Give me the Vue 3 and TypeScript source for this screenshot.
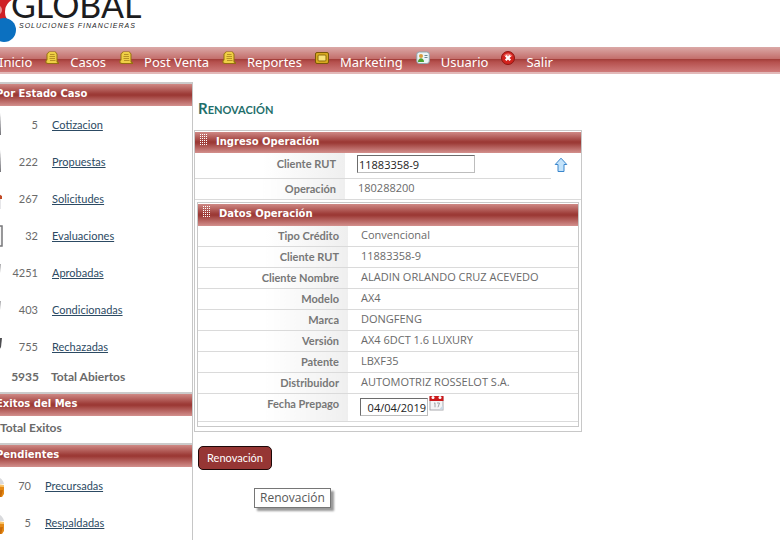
<script setup lang="ts">
import { ref } from 'vue'

interface MenuItem {
  label: string
  icon: 'none' | 'note' | 'board' | 'user' | 'exit'
}
interface StatusRow {
  count: number
  label: string
  icon: 'page' | 'house' | 'sheet' | 'check' | 'dark' | 'box'
}
interface Detail {
  label: string
  value: string
}

const menu: MenuItem[] = [
  { label: 'Inicio', icon: 'none' },
  { label: 'Casos', icon: 'note' },
  { label: 'Post Venta', icon: 'note' },
  { label: 'Reportes', icon: 'note' },
  { label: 'Marketing', icon: 'board' },
  { label: 'Usuario', icon: 'user' },
  { label: 'Salir', icon: 'exit' },
]

const estados: StatusRow[] = [
  { count: 5, label: 'Cotizacion', icon: 'page' },
  { count: 222, label: 'Propuestas', icon: 'page' },
  { count: 267, label: 'Solicitudes', icon: 'house' },
  { count: 32, label: 'Evaluaciones', icon: 'sheet' },
  { count: 4251, label: 'Aprobadas', icon: 'check' },
  { count: 403, label: 'Condicionadas', icon: 'check' },
  { count: 755, label: 'Rechazadas', icon: 'dark' },
]

const pendientes: StatusRow[] = [
  { count: 70, label: 'Precursadas', icon: 'box' },
  { count: 5, label: 'Respaldadas', icon: 'box' },
]

const detalles: Detail[] = [
  { label: 'Tipo Crédito', value: 'Convencional' },
  { label: 'Cliente RUT', value: '11883358-9' },
  { label: 'Cliente Nombre', value: 'ALADIN ORLANDO CRUZ ACEVEDO' },
  { label: 'Modelo', value: 'AX4' },
  { label: 'Marca', value: 'DONGFENG' },
  { label: 'Versión', value: 'AX4 6DCT 1.6 LUXURY' },
  { label: 'Patente', value: 'LBXF35' },
  { label: 'Distribuidor', value: 'AUTOMOTRIZ ROSSELOT S.A.' },
]

const rut = ref('11883358-9')
const fecha = ref('04/04/2019')
</script>

<template>
  <div class="page">
    <header class="brand">
      <svg class="logo" viewBox="0 0 170 47" width="170" height="47" role="img" aria-label="Global Soluciones Financieras">
        <circle cx="24" cy="8" r="16" fill="#cf2027" />
        <circle cx="43" cy="12" r="14" fill="#fff" />
        <circle cx="21" cy="10" r="5" fill="#e58c8e" />
        <circle cx="28" cy="30" r="12" fill="#0b70c0" />
        <text class="logo-name" x="35" y="18">GLOBAL</text>
        <text class="logo-sub" x="43" y="28">SOLUCIONES FINANCIERAS</text>
      </svg>
    </header>

    <nav class="menu">
      <a v-for="item in menu" :key="item.label" href="#" class="menu-item">
        <svg v-if="item.icon !== 'none'" class="menu-icon" viewBox="0 0 14 14" width="14" height="14" aria-hidden="true">
          <g v-if="item.icon === 'note'">
            <path d="M4 .5h6.500L12.500 3v7L14 11.500V13H2.500L.5 12V9.500L1.500 8.500V3z" fill="#94700f" />
            <path d="M4.500 1h5.500l1.500 2v8l1 1H3L1.500 11.500V10L2.500 9V3z" fill="#efcf45" />
            <path d="M5 3.500h4.500M4.500 5.500h5.500M4.500 7.500h5.500M5 9.500h5.500" stroke="#a8821a" stroke-width=".8" />
          </g>
          <g v-else-if="item.icon === 'board'">
            <rect x=".5" y="1.500" width="13" height="11" rx="1.500" fill="#d8a91f" stroke="#7a5708" />
            <rect x="3" y="4" width="8" height="6" rx="1" fill="#f8e27a" stroke="#8f6a0d" />
          </g>
          <g v-else-if="item.icon === 'user'">
            <rect x=".8" y="1" width="12.500" height="11.500" rx="2.500" fill="#edf4f6" stroke="#8ea5ad" />
            <circle cx="5" cy="5" r="2" fill="#d89b3d" />
            <path d="M2 11c0-5 6-5 6 0z" fill="#4aa12f" />
            <path d="M8.500 4.500h3M8.500 6.500h3" stroke="#6b8790" />
          </g>
          <g v-else>
            <circle cx="7" cy="7" r="6.500" fill="#d3221c" stroke="#8e1512" />
            <path d="M2.500 5C4 1.500 10 1.500 11.500 5 9 7 5 4 2.500 5z" fill="#ef7770" />
            <path d="M4.700 4.700l4.600 4.600M9.300 4.700L4.700 9.300" stroke="#fff" stroke-width="2.200" />
          </g>
        </svg>
        <span class="menu-label">{{ item.label }}</span>
      </a>
    </nav>

    <div class="columns">
      <aside class="side">
        <section class="side-box">
          <h2 class="bar side-bar">Por Estado Caso</h2>
          <ul class="status">
            <li v-for="row in estados" :key="row.label" class="status-row">
              <svg class="status-icon" viewBox="0 0 28 26" width="28" height="26" aria-hidden="true">
                <g v-if="row.icon === 'page'">
                  <path d="M6 1h18l1 22H4z" fill="#d7d7da" />
                  <path d="M24 1l1 22h-2z" fill="#77777c" />
                </g>
                <g v-else-if="row.icon === 'house'">
                  <path d="M6 12h19v11H6z" fill="#e6e6e9" />
                  <path d="M6 11L16 4l10 6v3h-3l-7-5-8 6z" fill="#c14a26" />
                </g>
                <path v-else-if="row.icon === 'sheet'" d="M5 3h21v20H5z" fill="#f7f7f7" stroke="#77777a" stroke-width="1.500" />
                <path v-else-if="row.icon === 'check'" d="M10 4h15l-1 9-3 5H9z" fill="#a9a9ac" />
                <path v-else d="M10 4h16l-1 9-3 5H9z" fill="#4d4d50" />
              </svg>
              <span class="count">{{ row.count }}</span>
              <a href="#" class="link">{{ row.label }}</a>
            </li>
          </ul>
          <p class="total"><span class="total-count">5935</span><span>Total Abiertos</span></p>
        </section>

        <section class="side-box">
          <h2 class="bar side-bar">Exitos del Mes</h2>
          <p class="exitos">Total Exitos</p>
        </section>

        <section class="side-box">
          <h2 class="bar side-bar">Pendientes</h2>
          <ul class="status pending">
            <li v-for="row in pendientes" :key="row.label" class="status-row">
              <svg class="status-icon" viewBox="0 0 28 26" width="28" height="26" aria-hidden="true">
                <path d="M10 11c1-10 16-10 18 0z" fill="#d9dadd" />
                <path d="M10 11l18 1v9l-2 3H10z" fill="#e58a16" />
                <path d="M10 11l18 1v2l-18-1z" fill="#f9c56c" />
                <path d="M10 19l17-2-2 7H10z" fill="#c86a08" />
              </svg>
              <span class="count">{{ row.count }}</span>
              <a href="#" class="link">{{ row.label }}</a>
            </li>
          </ul>
        </section>
      </aside>

      <main class="content">
        <h1 class="title">Renovación</h1>

        <section class="panel">
          <h2 class="bar panel-bar"><span class="grip"></span>Ingreso Operación</h2>
          <table class="form">
            <tbody>
              <tr class="entry">
                <th scope="row"><label for="rut">Cliente RUT</label></th>
                <td><input id="rut" v-model="rut" class="field rut" type="text" /></td>
                <td class="action">
                  <button type="button" class="icon-button" aria-label="Subir">
                    <svg viewBox="0 0 14 16" width="14" height="16" aria-hidden="true">
                      <path d="M7 1.200L12.800 7.500H10V14.500H4V7.500H1.200z" fill="#c3e3fb" stroke="#3a86cc" stroke-linejoin="round" />
                    </svg>
                  </button>
                </td>
              </tr>
              <tr class="line">
                <th scope="row">Operación</th>
                <td colspan="2">180288200</td>
              </tr>
            </tbody>
          </table>

          <section class="panel inner">
            <h2 class="bar panel-bar"><span class="grip"></span>Datos Operación</h2>
            <table class="form">
              <tbody>
                <tr v-for="d in detalles" :key="d.label" class="line">
                  <th scope="row">{{ d.label }}</th>
                  <td>{{ d.value }}</td>
                </tr>
                <tr class="date-row">
                  <th scope="row"><label for="fecha">Fecha Prepago</label></th>
                  <td>
                    <div class="date">
                      <input id="fecha" v-model="fecha" class="field fecha" type="text" />
                      <button type="button" class="icon-button" aria-label="Calendario">
                        <svg viewBox="0 0 15 16" width="15" height="16" aria-hidden="true">
                          <rect x="1" y="2" width="13" height="13" fill="#f4f4f5" stroke="#a9a9ad" />
                          <path d="M.5 1h14v5H.5z" fill="#cb1a1c" />
                          <circle cx="4" cy="2.500" r="1.500" fill="#fff" />
                          <circle cx="11" cy="2.500" r="1.500" fill="#fff" />
                          <path d="M5 8.500l1-.7v4.500M8 8h2.500L9 12.300" fill="none" stroke="#9a9a9e" stroke-width=".9" />
                          <path d="M10 14.500l4-4v4z" fill="#c9d8e6" />
                        </svg>
                      </button>
                    </div>
                  </td>
                </tr>
              </tbody>
            </table>
          </section>
        </section>

        <div class="actions">
          <button type="button" class="submit">Renovación</button>
          <div class="tooltip" role="tooltip">Renovación</div>
        </div>
      </main>
    </div>
  </div>
</template>

<style>
body {
  overflow: hidden;
  background: #fff;
}
</style>

<style scoped>
.page {
  display: flex;
  flex-direction: column;
  height: 100vh;
  overflow: hidden;
  margin-left: -24px;
  font-family: Lato, 'Noto Sans', sans-serif;
  font-size: 11px;
  line-height: 16px;
  color: #6a6a6a;
}
.brand {
  flex: none;
  height: 47px;
}
.logo {
  display: block;
}
.logo-name {
  font-family: Lato, sans-serif;
  font-size: 34px;
  fill: #1c1c1e;
}
.logo-sub {
  font-family: 'Liberation Sans', sans-serif;
  font-size: 7px;
  font-style: italic;
  letter-spacing: 1px;
  fill: #1c1c1e;
}
.menu {
  flex: none;
  display: flex;
  gap: 13px;
  box-sizing: border-box;
  height: 27px;
  padding: 4px 0 0 23px;
  border-bottom: 2px solid #e2b9b9;
  background: linear-gradient(#dba9a7, #c4706d 46%, #a43f3b 50%, #b5504d 60%, #cf7b7a);
}
.menu-item {
  display: flex;
  gap: 11px;
  color: #fff;
  text-decoration: none;
}
.menu-label {
  font-family: 'Noto Sans', sans-serif;
  font-size: 13px;
  line-height: 22px;
}
.columns {
  flex: 1;
  min-height: 0;
  display: flex;
  align-items: stretch;
  padding-top: 8px;
}
.side {
  flex: none;
  box-sizing: border-box;
  width: 217px;
  border-right: 1px solid #c6c6c6;
}
.side-box {
  border-top: 2px solid #cbcbcb;
}
.bar {
  margin: 0;
  box-sizing: border-box;
  height: 22px;
  font-family: 'DejaVu Sans', Verdana, sans-serif;
  font-size: 10px;
  font-weight: bold;
  line-height: 20px;
  color: #fff;
  background: linear-gradient(#cf8985, #9c3a36 46%, #9c3a36 52%, #d3908d);
}
.side-bar {
  padding-left: 20px;
}
.status {
  margin: 0;
  padding: 0;
  list-style: none;
}
.status-row {
  display: flex;
  align-items: center;
  height: 37px;
}
.status-icon {
  flex: none;
  width: 28px;
}
.count {
  width: 34px;
  text-align: right;
}
.link {
  margin-left: 14px;
  color: #2c4a63;
}
.total,
.exitos {
  margin: 0;
  font-weight: bold;
  font-size: 12px;
}
.total {
  display: flex;
  gap: 12px;
  padding: 4px 0 7px;
}
.total-count {
  width: 63px;
  text-align: right;
}
.exitos {
  padding: 4px 0 7px 24px;
}
.pending .count {
  width: 27px;
}
.content {
  flex: 1;
  min-width: 0;
  padding: 17px 0 0 1px;
}
.title {
  margin: 0 0 13px 4px;
  font-size: 15px;
  line-height: 18px;
  font-variant: small-caps;
  color: #1f6f6b;
}
.panel {
  box-sizing: border-box;
  max-width: 388px;
  padding-top: 1px;
  border: 1px solid #c8c8c8;
}
.panel-bar {
  display: flex;
  gap: 8px;
  height: 21px;
  padding-left: 5px;
}
.grip {
  width: 8px;
  height: 12px;
  margin-top: 2px;
  background: repeating-conic-gradient(transparent 0 75%, #fff 0 100%) 0 0 / 2px 2px;
}
.inner {
  margin: 2px 2px 4px;
  padding-bottom: 4px;
}
.inner .panel-bar {
  height: 22px;
}
.form {
  width: 100%;
  border-collapse: collapse;
}
.form th {
  box-sizing: border-box;
  width: 150px;
  padding: 0 9px 0 0;
  text-align: right;
  color: #777;
  border-bottom: 1px solid #dadada;
  background: linear-gradient(to right, #fff 45%, #efefef);
}
.form td {
  padding: 0 0 2px 13px;
  font-family: 'Open Sans', 'Noto Sans', sans-serif;
  border-bottom: 1px solid #dadada;
}
.form .action {
  width: 17px;
  padding: 0 10px 2px 3px;
  border-bottom: 0;
}
.entry {
  height: 25px;
}
.entry th {
  padding-bottom: 3px;
}
.line {
  height: 21px;
}
.date-row {
  height: 28px;
}
.date-row th,
.date-row td {
  vertical-align: top;
}
.date-row th {
  padding-top: 2px;
}
.date {
  display: flex;
  align-items: flex-start;
  gap: 1px;
  padding-top: 1px;
}
.field {
  box-sizing: border-box;
  display: block;
  height: 18px;
  margin-left: -1px;
  padding: 0 1px;
  border: 1px solid #bdbdbd;
  border-top-color: #6c6c6c;
  border-left-color: #6c6c6c;
  font: inherit;
  color: #222;
  background: #fff;
}
.rut {
  width: 118px;
}
.fecha {
  width: 68px;
  margin-top: 3px;
  text-align: right;
}
.icon-button {
  display: block;
  padding: 0;
  border: 0;
  background: none;
}
.icon-button svg {
  display: block;
}
.actions {
  padding: 14px 0 0 4px;
}
.submit {
  display: block;
  height: 24px;
  width: 74px;
  padding: 0;
  border: 1px solid #1c0808;
  border-radius: 5px;
  font: inherit;
  font-size: 11px;
  color: #fff;
  background: #963634;
}
.tooltip {
  width: max-content;
  margin: 18px 0 0 56px;
  padding: 0 5px;
  border: 1px solid #767676;
  font-family: 'Open Sans', sans-serif;
  font-size: 12px;
  line-height: 18px;
  color: #575757;
  background: #fff;
  box-shadow: 3px 3px 2px #999;
}
</style>
